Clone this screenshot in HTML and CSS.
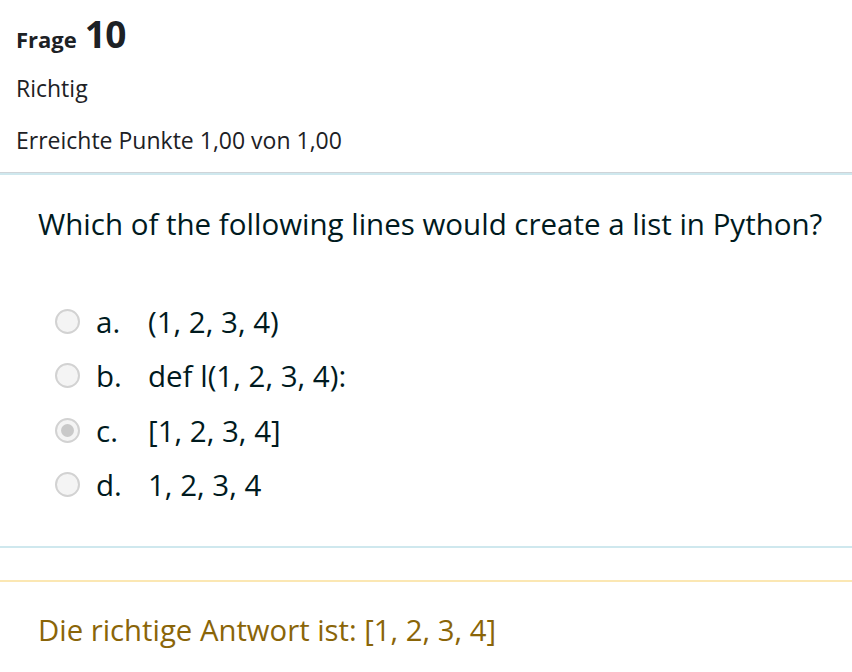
FILE: index.html
```html
<!DOCTYPE html>
<html lang="de">
<head>
<meta charset="utf-8">
<title>Frage 10</title>
<link rel="stylesheet" href="styles.css">
</head>
<body>
<div class="info">
  <h3 class="qno"><span class="lbl">Frage</span> <span class="num">10</span></h3>
  <div class="state">Richtig</div>
  <div class="grade">Erreichte Punkte 1,00 von 1,00</div>
</div>
<div class="formulation">
  <div class="qtext">Which of the following lines would create a list in Python?</div>
  <div class="answers">
    <div class="opt"><span class="radio"></span><span class="letter">a.</span><span class="txt">(1, 2, 3, 4)</span></div>
    <div class="opt"><span class="radio"></span><span class="letter">b.</span><span class="txt">def l(1, 2, 3, 4):</span></div>
    <div class="opt"><span class="radio checked"></span><span class="letter">c.</span><span class="txt">[1, 2, 3, 4]</span></div>
    <div class="opt"><span class="radio"></span><span class="letter">d.</span><span class="txt">1, 2, 3, 4</span></div>
  </div>
</div>
<div class="outcome">
  <div class="rightanswer">Die richtige Antwort ist: [1, 2, 3, 4]</div>
</div>
</body>
</html>
```

FILE: styles.css
```css
html, body {
  margin: 0;
  padding: 0;
  background: #fff;
}
body {
  font-family: "Open Sans", "Noto Sans", sans-serif;
  color: #1d2125;
  width: 852px;
  overflow: hidden;
}
.info {
  padding: 0 16px;
  height: 173px;
  border-bottom: 1px solid #cfd4d8;
  box-sizing: border-box;
}
.qno {
  margin: 0;
  padding-top: 12px;
  height: 44px;
  line-height: 44px;
  font-weight: 700;
}
.qno .lbl { font-size: 22px; margin-right: 3px; }
.qno .num { font-size: 37px; letter-spacing: -0.5px; }
.state {
  font-size: 23px;
  height: 62px;
  line-height: 36px;
  padding-top: 14px;
  box-sizing: border-box;
}
.grade {
  font-size: 23px;
  line-height: 36px;
  padding-top: 4px;
}
.formulation {
  border-top: 2px solid #cfe8ee;
  border-bottom: 2px solid #cfe8ee;
  padding: 0 38px;
  height: 375px;
  box-sizing: border-box;
  color: #001a1e;
}
.qtext {
  font-size: 29.5px;
  padding-top: 27px;
  line-height: 44px;
  height: 119px;
  box-sizing: border-box;
  white-space: nowrap;
}
.answers {
  display: flex;
  flex-direction: column;
  padding-left: 17px;
}
.opt {
  display: flex;
  align-items: center;
  height: 54.5px;
  font-size: 29.5px;
}
.radio {
  width: 25px;
  height: 25px;
  border: 2px solid #d2d2d2;
  border-radius: 50%;
  background: #f4f4f4;
  box-sizing: border-box;
  margin-right: 16px;
  display: flex;
  align-items: center;
  justify-content: center;
  flex: none;
}
.radio.checked::after {
  content: "";
  width: 13px;
  height: 13px;
  border-radius: 50%;
  background: #c9c9c9;
}
.letter {
  width: 52px;
  flex: none;
}
.outcome {
  margin-top: 32px;
  border-top: 2px solid #fbe7b3;
  padding: 28px 38px 0;
}
.rightanswer {
  color: #8a6508;
  font-size: 29.3px;
  line-height: 40px;
  white-space: nowrap;
}
```
